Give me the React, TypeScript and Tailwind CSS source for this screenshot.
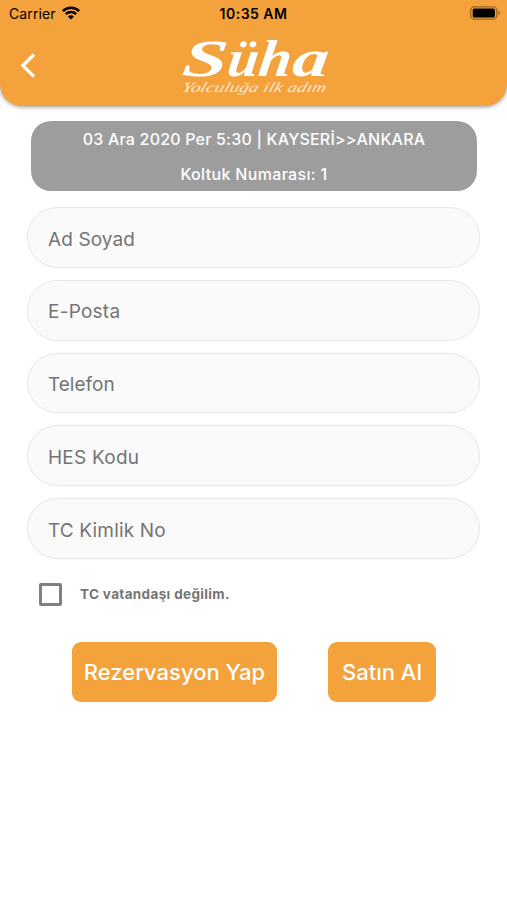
import React from 'react';

const App = () => {
  const fields = [
    { id: 1, label: 'Ad Soyad', tracking: 'tracking-[0.1px]' },
    { id: 2, label: 'E-Posta', tracking: 'tracking-[0.25px]' },
    { id: 3, label: 'Telefon', tracking: 'tracking-[0px]' },
    { id: 4, label: 'HES Kodu', tracking: 'tracking-[0.25px]' },
    { id: 5, label: 'TC Kimlik No', tracking: 'tracking-[0.15px]' },
  ];

  return (
    <div className="min-h-screen w-full overflow-hidden bg-white font-['Inter',sans-serif]">
      {/* Header */}
      <header className="h-[106px] rounded-b-[22px] bg-[#f4a23c] shadow-[0_1px_4px_rgba(0,0,0,0.4)]">
        {/* Status Bar */}
        <div className="grid h-[27px] grid-cols-3 items-center pl-[9px] pr-[6px] text-black">
          <div className="flex items-center gap-[6px]">
            <span className="text-[14px] leading-none tracking-[0.1px]">Carrier</span>
            <svg className="-mt-px h-[14px] w-[18px]" viewBox="0 0 18 14" fill="none" stroke="currentColor">
              <path strokeWidth="2.5" d="M.9 5.1a11.4 11.4 0 0116.2 0" />
              <path strokeWidth="2.4" d="M3.8 8.2a7.4 7.4 0 0110.4 0" />
              <path fill="currentColor" stroke="none" d="M5.9 10.5a4.4 4.4 0 016.2 0L9 13.6z" />
            </svg>
          </div>
          <span className="-ml-[3px] whitespace-nowrap text-center text-[14px] font-semibold leading-none tracking-[0.5px]">10:35 AM</span>
          <svg className="-mt-px h-[14px] w-[31px] justify-self-end" viewBox="0 0 31 14">
            <rect x="0.8" y="0.8" width="26" height="12.4" rx="3.6" fill="none" stroke="#9b691f" strokeWidth="1.3" />
            <rect x="2.7" y="2.6" width="22.2" height="8.8" rx="1.5" fill="#000" />
            <path fill="#9b691f" d="M28.3 4.8a2.3 2.3 0 010 4.4z" />
          </svg>
        </div>

        {/* Title Row */}
        <div className="flex h-[79px] items-start justify-between px-5">
          <button className="mt-[26px] text-white" aria-label="Geri">
            <svg className="h-[25px] w-4" viewBox="0 0 16 25" fill="none" stroke="currentColor">
              <path strokeWidth="3.4" d="M14 1.6L2.9 12.6 14 23.6" />
            </svg>
          </button>
          <svg className="h-[75px] w-[152px] overflow-visible" viewBox="0 0 152 75" fill="#fff">
            <g transform="translate(3 48.5) skewX(-7)">
              <text className="font-['Liberation_Serif',serif] text-[52px] font-bold italic">
                <tspan x="0" textLength="45" lengthAdjust="spacingAndGlyphs">S</tspan>
                <tspan x="45" textLength="31" lengthAdjust="spacingAndGlyphs">ü</tspan>
                <tspan x="76" textLength="33" lengthAdjust="spacingAndGlyphs">h</tspan>
                <tspan x="110" textLength="36" lengthAdjust="spacingAndGlyphs">a</tspan>
              </text>
            </g>
            <g transform="translate(3 65) skewX(-18)">
              <text
                className="font-['Liberation_Serif',serif] text-[14px] italic"
                fillOpacity="0.75"
                textLength="144"
                lengthAdjust="spacingAndGlyphs"
              >
                Yolculuğa ilk adım
              </text>
            </g>
          </svg>
          <div className="w-4" />
        </div>
      </header>

      <main>
        {/* Trip Summary */}
        <section className="ml-[31px] mr-[30px] mt-[15px] flex h-[70px] flex-col items-center rounded-[20px] bg-[#9d9d9d] text-[16px] font-medium text-white">
          <p className="h-[35px] leading-[36px] tracking-[0.2px]">03 Ara 2020 Per 5:30 | KAYSERİ&gt;&gt;ANKARA</p>
          <p className="h-[35px] leading-[36px] tracking-[0.33px]">Koltuk Numarası: 1</p>
        </section>

        {/* Passenger Fields */}
        <div className="mx-[27px] mt-4 flex flex-col gap-3">
          {fields.map((field) => (
            <div
              key={field.id}
              className="flex h-[60.8px] items-center rounded-full border border-[#e6e6e6] bg-[#fafafa] px-5 pt-[5px]"
            >
              <span className={`text-[19px] text-[#747474] ${field.tracking}`}>{field.label}</span>
            </div>
          ))}
        </div>

        {/* Citizenship Checkbox */}
        <label className="ml-[39px] mt-6 flex items-center gap-[18px]">
          <span className="h-[23px] w-[23px] rounded-[2px] border-[3px] border-[#808080]" />
          <span className="pb-px text-[13.5px] font-bold tracking-[0.35px] text-[#757575]">TC vatandaşı değilim.</span>
        </label>

        {/* Actions */}
        <div className="ml-[72px] mt-9 flex gap-[51px] text-[22px] font-medium text-white">
          <button className="h-[60px] w-[205px] rounded-[9px] bg-[#f4a23c] pt-[2px]">Rezervasyon Yap</button>
          <button className="h-[60px] w-[108px] rounded-[9px] bg-[#f4a23c] pt-[2px]">Satın Al</button>
        </div>
      </main>
    </div>
  );
};

export default App;
